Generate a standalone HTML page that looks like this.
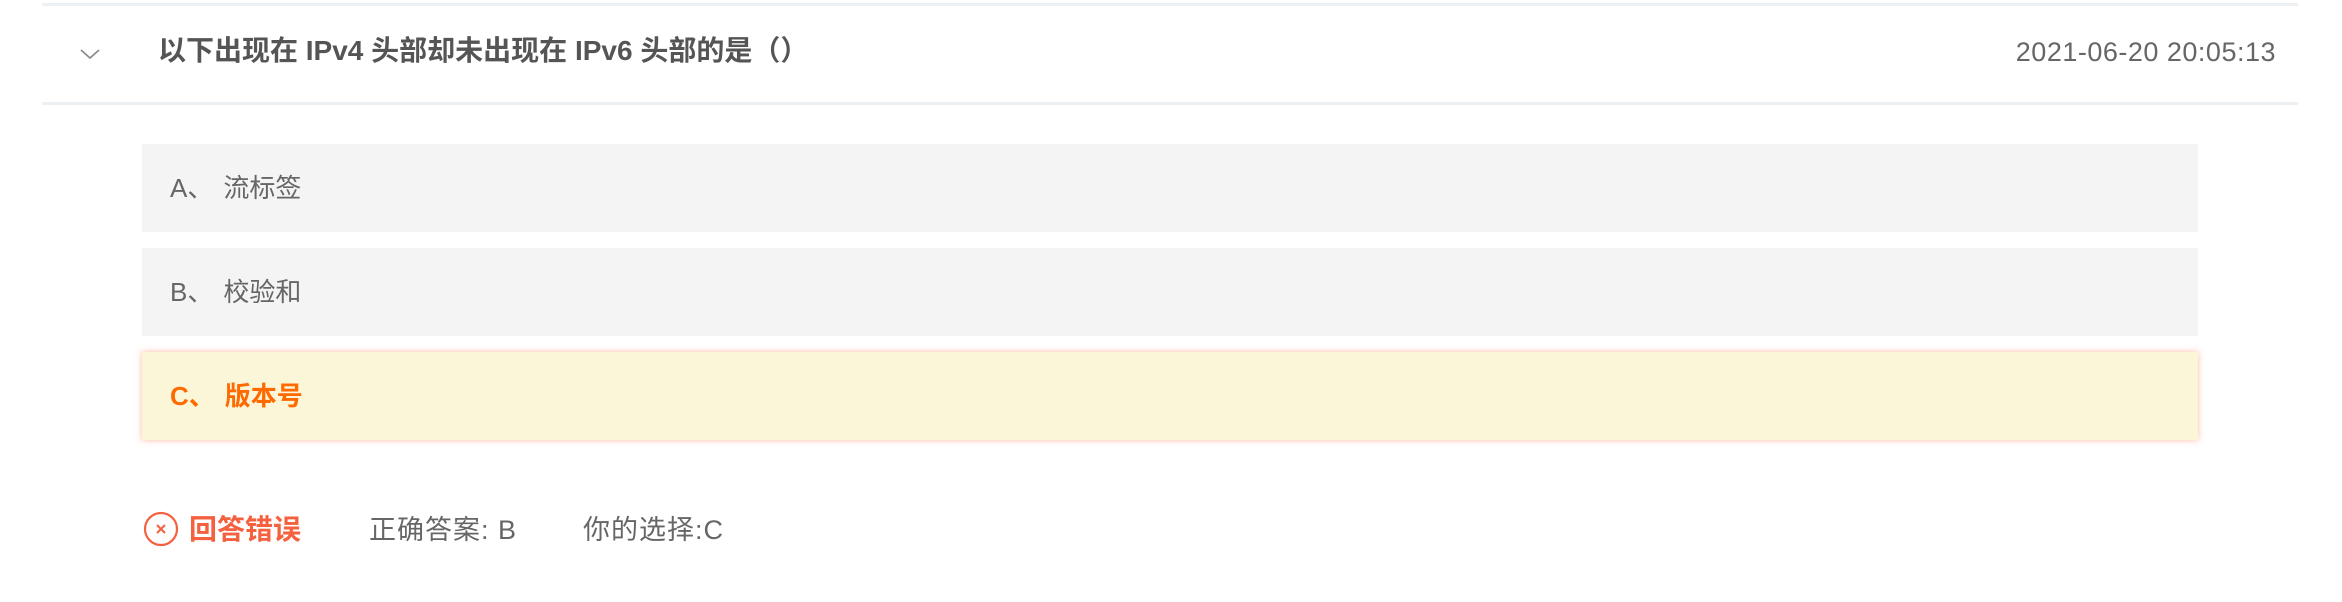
<!DOCTYPE html>
<html><head><meta charset="utf-8"><style>
html,body{margin:0;padding:0;background:#fff;width:2342px;height:602px;overflow:hidden;font-family:"Liberation Sans","Noto Sans CJK SC",sans-serif;}
.line{position:absolute;left:42px;width:2256px;height:3px;background:#edf0f3;}
.title{position:absolute;left:158px;top:33px;font-size:28px;font-weight:bold;color:#555;line-height:36px;white-space:nowrap;}
.time{position:absolute;right:66px;top:34px;font-size:27px;color:#666;line-height:36px;letter-spacing:0.5px;}
.chev{position:absolute;left:80px;top:48px;}
.opt{position:absolute;left:142px;width:2056px;height:88px;background:#f4f4f4;font-size:26px;color:#666;line-height:88px;box-sizing:border-box;padding-left:28px;}
.opt span{margin-left:10px;}
.opt.sel{background:#fcf6d8;color:#ff6a00;font-weight:bold;box-shadow:0 0 6px rgba(255,130,90,.55);}
.bot{position:absolute;top:512px;font-size:27px;line-height:36px;color:#666;white-space:nowrap;}
</style></head><body>
<div class="line" style="top:3px"></div>
<svg class="chev" width="20" height="12" viewBox="0 0 20 12"><path d="M1 2 L10 10 L19 2" fill="none" stroke="#888" stroke-width="1.6"/></svg>
<div class="title">以下出现在 IPv4 头部却未出现在 IPv6 头部的是（）</div>
<div class="time">2021-06-20 20:05:13</div>
<div class="line" style="top:102px"></div>
<div class="opt" style="top:144px">A、<span>流标签</span></div>
<div class="opt" style="top:248px">B、<span>校验和</span></div>
<div class="opt sel" style="top:352px">C、<span>版本号</span></div>
<svg style="position:absolute;left:143px;top:511px" width="36" height="36" viewBox="0 0 36 36"><circle cx="18" cy="18" r="16" fill="none" stroke="#f5603f" stroke-width="2.2"/><path d="M14 14 L22 22 M22 14 L14 22" stroke="#f5603f" stroke-width="2"/></svg>
<div class="bot" style="left:189px;color:#f5603f;font-weight:bold;font-size:28px">回答错误</div>
<div class="bot" style="left:369px;letter-spacing:1px">正确答案: B</div>
<div class="bot" style="left:583px;letter-spacing:1px">你的选择:C</div>
</body></html>
